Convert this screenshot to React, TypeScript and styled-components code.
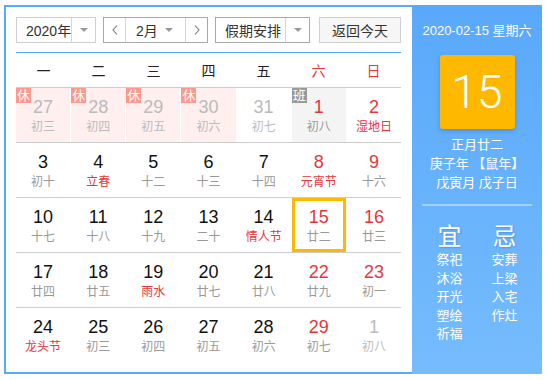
import React from "react";
import styled, { createGlobalStyle, css } from "styled-components";

const GlobalStyle = createGlobalStyle`
  body {
    margin: 0;
    background: #fff;
    font-family: "Liberation Sans", "Noto Sans CJK SC", sans-serif;
  }
`;

const BLUE = "#5aaafb";
const RED = "#e8353b";
const ORANGE = "#ffb800";

const Frame = styled.div`
  display: flex;
  width: 538px;
  height: 369px;
  margin: 5px 0 0 4px;
`;

const Main = styled.div`
  flex: 1;
  border: 2px solid ${BLUE};
  border-right: none;
  padding: 10px 11px 10px 10px;
`;

const Toolbar = styled.div`
  display: flex;
  align-items: center;
  height: 26px;
  padding-bottom: 9px;
  border-bottom: 1px solid ${BLUE};
`;

const SelectBox = styled.div<{ $w: number; $dark?: boolean }>`
  display: flex;
  width: ${(p) => p.$w}px;
  height: 26px;
  box-sizing: border-box;
  border: 1px solid ${(p) => (p.$dark ? "#a8a8a8" : "#cfcfcf")};
  margin-right: 7px;
  font-size: 14px;
  color: #333;
  white-space: nowrap;
`;

const SelectText = styled.div<{ $pad: number }>`
  flex: 1;
  display: flex;
  align-items: center;
  padding-left: ${(p) => p.$pad}px;
  overflow: hidden;
`;

const ArrowPart = styled.div`
  width: 23px;
  flex-shrink: 0;
  display: flex;
  align-items: center;
  justify-content: center;
  border-left: 1px solid #d6d6d6;
  &::after {
    content: "";
    border-left: 4px solid transparent;
    border-right: 4px solid transparent;
    border-top: 4px solid #999;
  }
`;

const NavBtn = styled.div<{ $side: "l" | "r" }>`
  width: 21px;
  flex-shrink: 0;
  display: flex;
  align-items: center;
  justify-content: center;
  ${(p) =>
    p.$side === "l"
      ? "border-right: 1px solid #d6d6d6;"
      : "border-left: 1px solid #d6d6d6;"}
`;

const MonthText = styled.div`
  flex: 1;
  display: flex;
  align-items: center;
  padding-left: 10px;
`;

const MonthArrow = styled.div`
  width: 20px;
  display: flex;
  align-items: center;
  justify-content: flex-start;
  &::after {
    content: "";
    border-left: 4px solid transparent;
    border-right: 4px solid transparent;
    border-top: 4px solid #999;
  }
`;

const TodayButton = styled.div`
  margin-left: 2px;
  width: 82px;
  height: 26px;
  box-sizing: border-box;
  border: 1px solid #cfcfcf;
  background: #f6f6f6;
  display: flex;
  align-items: center;
  justify-content: center;
  font-size: 14px;
  color: #333;
  white-space: nowrap;
`;

const WeekHeader = styled.div`
  display: grid;
  grid-template-columns: repeat(7, 1fr);
  height: 34px;
  align-items: center;
  border-bottom: 1px solid #cccccc;
`;

const WeekDay = styled.div<{ $red?: boolean }>`
  text-align: center;
  font-size: 14px;
  color: ${(p) => (p.$red ? RED : "#222")};
`;

const Row = styled.div<{ $last?: boolean }>`
  display: grid;
  grid-template-columns: repeat(7, 1fr);
  column-gap: 1px;
  height: 54px;
  border-bottom: ${(p) => (p.$last ? "none" : "1px solid #cccccc")};
`;

type Tag = "rest" | "work" | undefined;

const Cell = styled.div<{ $tag: Tag; $sel?: boolean }>`
  position: relative;
  box-sizing: border-box;
  padding-top: 8px;
  text-align: center;
  background: ${(p) =>
    p.$tag === "rest" ? "#ffefee" : p.$tag === "work" ? "#f4f4f4" : "#fff"};
  ${(p) =>
    p.$sel &&
    css`
      box-shadow: inset 0 0 0 3px ${ORANGE};
    `}
`;

const Badge = styled.span<{ $tag: Tag }>`
  position: absolute;
  left: 0;
  top: 0;
  width: 15px;
  height: 15px;
  line-height: 15px;
  font-size: 13px;
  color: #fff;
  text-align: center;
  background: ${(p) => (p.$tag === "rest" ? "#fb998d" : "#999")};
`;

const DayNum = styled.div<{ $c: string }>`
  font-size: 18px;
  line-height: 22px;
  color: ${(p) => p.$c};
`;

const Lunar = styled.div<{ $c: string }>`
  font-size: 12px;
  line-height: 18px;
  color: ${(p) => p.$c};
  white-space: nowrap;
`;

const Side = styled.div`
  width: 130px;
  background: linear-gradient(180deg, #59a8fb 0%, #76bcfd 100%);
  color: #fff;
  display: flex;
  flex-direction: column;
  align-items: center;
  padding-top: 17px;
`;

const DateLine = styled.div`
  font-size: 13px;
  line-height: 18px;
  white-space: nowrap;
`;

const BigDay = styled.div`
  margin-top: 15px;
  width: 75px;
  height: 74px;
  border-radius: 3px;
  background: ${ORANGE};
  box-shadow: 0 2px 4px rgba(0, 60, 140, 0.25);
  display: flex;
  align-items: center;
  justify-content: center;
  font-family: Roboto, "Liberation Sans", sans-serif;
  font-weight: 300;
  font-size: 46px;
`;

const LunarInfo = styled.div`
  margin-top: 6px;
  font-size: 13px;
  line-height: 19px;
  text-align: center;
  white-space: nowrap;
`;

const Divider = styled.div`
  margin-top: 12px;
  width: 110px;
  height: 2px;
  background: rgba(255, 255, 255, 0.4);
`;

const Advice = styled.div`
  margin-top: 17px;
  display: grid;
  grid-template-columns: 26px 26px;
  column-gap: 29px;
`;

const AdviceCol = styled.div`
  display: flex;
  flex-direction: column;
  align-items: center;
`;

const AdviceTitle = styled.div`
  font-size: 24px;
  line-height: 28px;
  text-shadow: 1px 1px 2px rgba(0, 40, 120, 0.25);
`;

const AdviceItem = styled.div`
  font-size: 13px;
  line-height: 18.5px;
  white-space: nowrap;
`;

const Chevron = ({ dir }: { dir: "l" | "r" }) => (
  <svg width="6" height="10" viewBox="0 0 6 10">
    <polyline
      points={dir === "l" ? "5,0.5 1,5 5,9.5" : "1,0.5 5,5 1,9.5"}
      fill="none"
      stroke="#777"
      strokeWidth="1.1"
    />
  </svg>
);

type Day = {
  d: number;
  l: string;
  other?: boolean;
  fest?: boolean;
  tag?: Tag;
  sel?: boolean;
};

const weeks: Day[][] = [
  [
    { d: 27, l: "初三", other: true, tag: "rest" },
    { d: 28, l: "初四", other: true, tag: "rest" },
    { d: 29, l: "初五", other: true, tag: "rest" },
    { d: 30, l: "初六", other: true, tag: "rest" },
    { d: 31, l: "初七", other: true },
    { d: 1, l: "初八", tag: "work" },
    { d: 2, l: "湿地日", fest: true },
  ],
  [
    { d: 3, l: "初十" },
    { d: 4, l: "立春", fest: true },
    { d: 5, l: "十二" },
    { d: 6, l: "十三" },
    { d: 7, l: "十四" },
    { d: 8, l: "元宵节", fest: true },
    { d: 9, l: "十六" },
  ],
  [
    { d: 10, l: "十七" },
    { d: 11, l: "十八" },
    { d: 12, l: "十九" },
    { d: 13, l: "二十" },
    { d: 14, l: "情人节", fest: true },
    { d: 15, l: "廿二", sel: true },
    { d: 16, l: "廿三" },
  ],
  [
    { d: 17, l: "廿四" },
    { d: 18, l: "廿五" },
    { d: 19, l: "雨水", fest: true },
    { d: 20, l: "廿七" },
    { d: 21, l: "廿八" },
    { d: 22, l: "廿九" },
    { d: 23, l: "初一" },
  ],
  [
    { d: 24, l: "龙头节", fest: true },
    { d: 25, l: "初三" },
    { d: 26, l: "初四" },
    { d: 27, l: "初五" },
    { d: 28, l: "初六" },
    { d: 29, l: "初七" },
    { d: 1, l: "初八", other: true },
  ],
];

const weekNames = ["一", "二", "三", "四", "五", "六", "日"];
const yi = ["祭祀", "沐浴", "开光", "塑绘", "祈福"];
const ji = ["安葬", "上梁", "入宅", "作灶"];

export default function App() {
  return (
    <>
      <GlobalStyle />
      <Frame>
        <Main>
          <Toolbar>
            <SelectBox $w={80}>
              <SelectText $pad={9}>2020年</SelectText>
              <ArrowPart />
            </SelectBox>
            <SelectBox $w={105} $dark>
              <NavBtn $side="l">
                <Chevron dir="l" />
              </NavBtn>
              <MonthText>2月</MonthText>
              <MonthArrow />
              <NavBtn $side="r">
                <Chevron dir="r" />
              </NavBtn>
            </SelectBox>
            <SelectBox $w={95} $dark>
              <SelectText $pad={9}>假期安排</SelectText>
              <ArrowPart />
            </SelectBox>
            <TodayButton>返回今天</TodayButton>
          </Toolbar>

          <WeekHeader>
            {weekNames.map((w, i) => (
              <WeekDay key={w} $red={i >= 5}>
                {w}
              </WeekDay>
            ))}
          </WeekHeader>

          {weeks.map((week, wi) => (
            <Row key={wi} $last={wi === weeks.length - 1}>
              {week.map((day, di) => {
                const weekend = di >= 5;
                const numColor = day.other
                  ? "#bbbbbb"
                  : weekend
                  ? RED
                  : "#111";
                const lunarColor = day.other
                  ? "#bbbbbb"
                  : day.fest
                  ? RED
                  : "#999";
                return (
                  <Cell key={di} $tag={day.tag} $sel={day.sel}>
                    {day.tag && (
                      <Badge $tag={day.tag}>
                        {day.tag === "rest" ? "休" : "班"}
                      </Badge>
                    )}
                    <DayNum $c={numColor}>{day.d}</DayNum>
                    <Lunar $c={lunarColor}>{day.l}</Lunar>
                  </Cell>
                );
              })}
            </Row>
          ))}
        </Main>

        <Side>
          <DateLine>2020-02-15 星期六</DateLine>
          <BigDay>15</BigDay>
          <LunarInfo>
            <div>正月廿二</div>
            <div>庚子年 【鼠年】</div>
            <div>戊寅月 戊子日</div>
          </LunarInfo>
          <Divider />
          <Advice>
            <AdviceCol>
              <AdviceTitle>宜</AdviceTitle>
              {yi.map((t) => (
                <AdviceItem key={t}>{t}</AdviceItem>
              ))}
            </AdviceCol>
            <AdviceCol>
              <AdviceTitle>忌</AdviceTitle>
              {ji.map((t) => (
                <AdviceItem key={t}>{t}</AdviceItem>
              ))}
            </AdviceCol>
          </Advice>
        </Side>
      </Frame>
    </>
  );
}
